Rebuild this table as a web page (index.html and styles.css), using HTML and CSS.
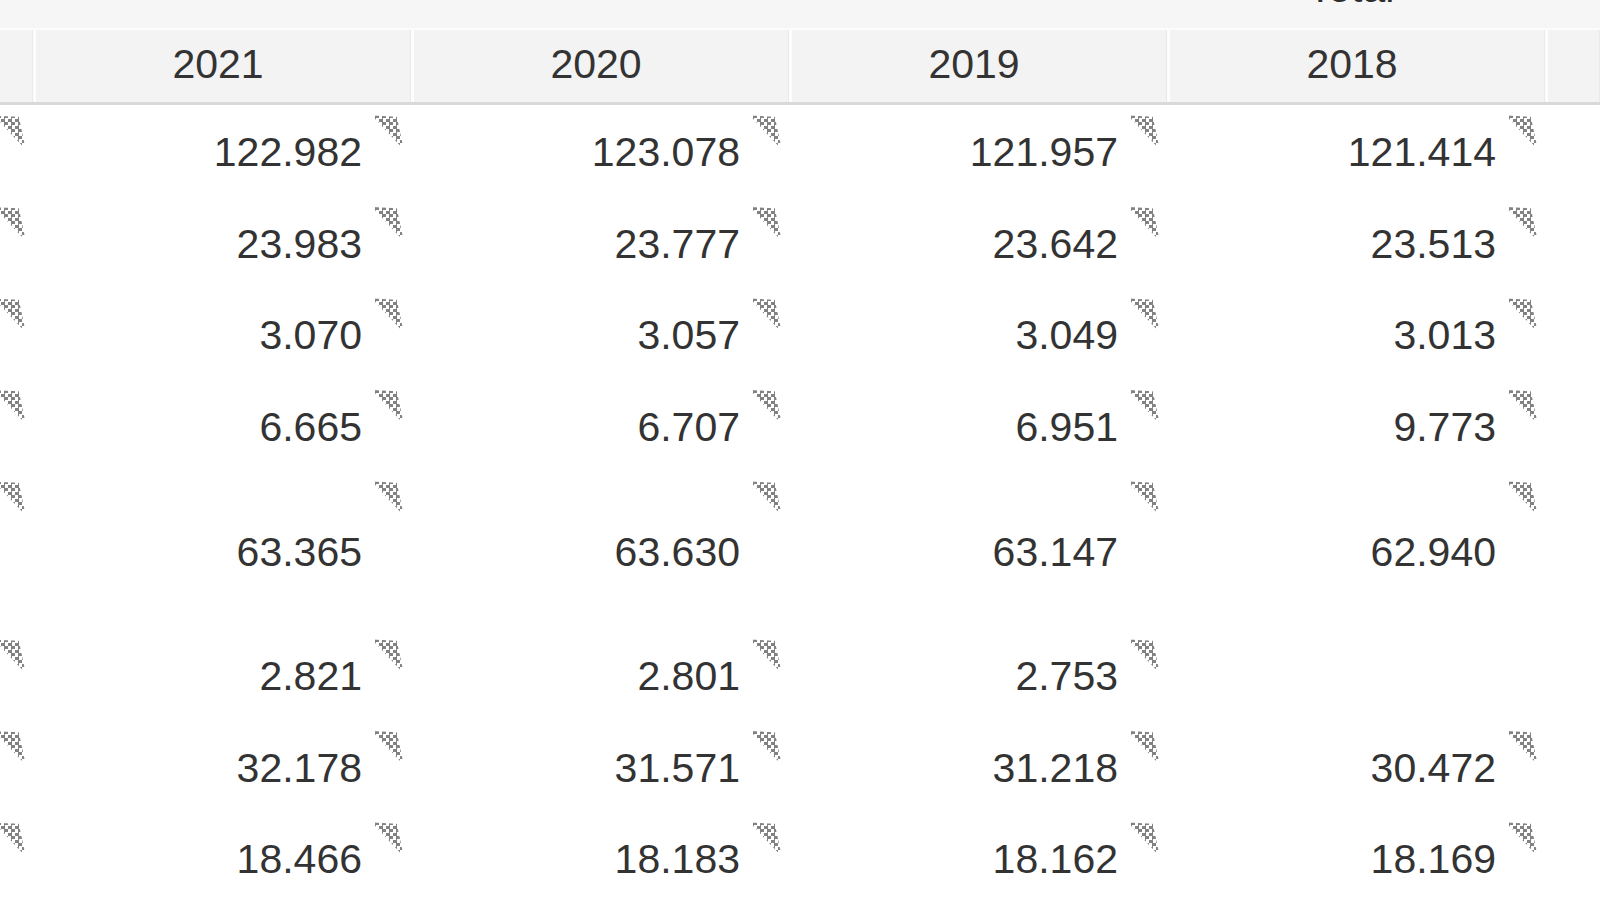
FILE: index.html
```html
<!DOCTYPE html>
<html>
<head>
<meta charset="utf-8">
<link rel="stylesheet" href="styles.css">
</head>
<body>
<div class="sheet">
  <div class="band">
    <div class="bcell"></div>
    <div class="bcell"></div>
    <div class="bcell"></div>
    <div class="bcell"></div>
    <div class="bcell"><span class="total">Total</span></div>
    <div class="bcell"></div>
  </div>
  <div class="head">
    <div class="hcell first"></div>
    <div class="hcell">2021</div>
    <div class="hcell">2020</div>
    <div class="hcell">2019</div>
    <div class="hcell">2018</div>
    <div class="hcell"></div>
  </div>
  <div class="rows">
    <div class="row">
      <div class="cell lead"><i class="note"></i></div>
      <div class="cell"><span>122.982</span><i class="note"></i></div>
      <div class="cell"><span>123.078</span><i class="note"></i></div>
      <div class="cell"><span>121.957</span><i class="note"></i></div>
      <div class="cell"><span>121.414</span><i class="note"></i></div>
      <div class="cell"></div>
    </div>
    <div class="row">
      <div class="cell lead"><i class="note"></i></div>
      <div class="cell"><span>23.983</span><i class="note"></i></div>
      <div class="cell"><span>23.777</span><i class="note"></i></div>
      <div class="cell"><span>23.642</span><i class="note"></i></div>
      <div class="cell"><span>23.513</span><i class="note"></i></div>
      <div class="cell"></div>
    </div>
    <div class="row">
      <div class="cell lead"><i class="note"></i></div>
      <div class="cell"><span>3.070</span><i class="note"></i></div>
      <div class="cell"><span>3.057</span><i class="note"></i></div>
      <div class="cell"><span>3.049</span><i class="note"></i></div>
      <div class="cell"><span>3.013</span><i class="note"></i></div>
      <div class="cell"></div>
    </div>
    <div class="row">
      <div class="cell lead"><i class="note"></i></div>
      <div class="cell"><span>6.665</span><i class="note"></i></div>
      <div class="cell"><span>6.707</span><i class="note"></i></div>
      <div class="cell"><span>6.951</span><i class="note"></i></div>
      <div class="cell"><span>9.773</span><i class="note"></i></div>
      <div class="cell"></div>
    </div>
    <div class="row tall">
      <div class="cell lead"><i class="note"></i></div>
      <div class="cell"><span>63.365</span><i class="note"></i></div>
      <div class="cell"><span>63.630</span><i class="note"></i></div>
      <div class="cell"><span>63.147</span><i class="note"></i></div>
      <div class="cell"><span>62.940</span><i class="note"></i></div>
      <div class="cell"></div>
    </div>
    <div class="row">
      <div class="cell lead"><i class="note"></i></div>
      <div class="cell"><span>2.821</span><i class="note"></i></div>
      <div class="cell"><span>2.801</span><i class="note"></i></div>
      <div class="cell"><span>2.753</span><i class="note"></i></div>
      <div class="cell"></div>
      <div class="cell"></div>
    </div>
    <div class="row">
      <div class="cell lead"><i class="note"></i></div>
      <div class="cell"><span>32.178</span><i class="note"></i></div>
      <div class="cell"><span>31.571</span><i class="note"></i></div>
      <div class="cell"><span>31.218</span><i class="note"></i></div>
      <div class="cell"><span>30.472</span><i class="note"></i></div>
      <div class="cell"></div>
    </div>
    <div class="row">
      <div class="cell lead"><i class="note"></i></div>
      <div class="cell"><span>18.466</span><i class="note"></i></div>
      <div class="cell"><span>18.183</span><i class="note"></i></div>
      <div class="cell"><span>18.162</span><i class="note"></i></div>
      <div class="cell"><span>18.169</span><i class="note"></i></div>
      <div class="cell"></div>
    </div>
  </div>
</div>
</body>
</html>
```
FILE: styles.css
```css
html, body {
  margin: 0;
  padding: 0;
  background: #ffffff;
}

body {
  width: 1600px;
  height: 900px;
  overflow: hidden;
  font-family: "Liberation Sans", Arial, sans-serif;
  font-size: 41px;
  color: #333333;
}

.sheet {
  display: flex;
  flex-direction: column;
}

.band,
.head,
.row {
  display: grid;
  grid-template-columns: 33px repeat(4, 378px) 1fr;
}

.band {
  height: 28px;
  background: #f6f6f6;
  overflow: hidden;
}

.bcell {
  display: flex;
  justify-content: center;
  padding-right: 10px;
}

.total {
  display: block;
  line-height: 41px;
  margin-top: -32px;
  color: #2e2e2e;
}

.head {
  height: 77px;
  box-sizing: border-box;
  border-top: 2px solid #fcfcfc;
  border-bottom: 3px solid #d9d9d9;
  background: #f3f3f3;
}

.hcell {
  display: flex;
  align-items: center;
  justify-content: center;
  padding-right: 10px;
  padding-bottom: 3px;
  line-height: 41px;
  border-left: 3px solid #fdfdfd;
  border-right: 1px solid #e9e9e9;
  color: #333333;
}

.hcell.first {
  border-left: none;
  padding: 0;
}

.row {
  height: 91.5px;
}

.row.tall {
  height: 158px;
}

.cell {
  position: relative;
  display: flex;
  align-items: center;
  justify-content: flex-end;
  padding-right: 49px;
  padding-top: 4px;
  line-height: 41px;
  min-width: 0;
}

.cell.lead {
  padding: 0;
}

.cell span {
  display: block;
}

.note {
  position: absolute;
  top: 10px;
  right: 8px;
  width: 31px;
  height: 31px;
  background: repeating-conic-gradient(#6c6c6c 0 25%, transparent 0 50%) 0 0 / 7px 7px;
  clip-path: polygon(0 2%, 80% 6%, 100% 100%, 92% 100%);
  opacity: 0.85;
}
```
